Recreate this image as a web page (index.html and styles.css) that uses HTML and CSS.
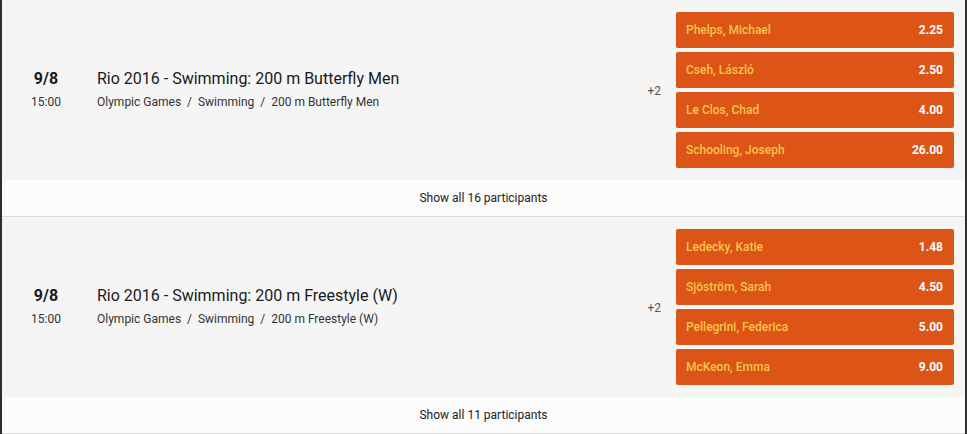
FILE: index.html
```html
<!DOCTYPE html>
<html>
<head>
<meta charset="utf-8">
<link rel="stylesheet" href="styles.css">
</head>
<body>
<div class="list">
  <div class="event">
    <div class="main">
      <div class="date">
        <div class="day">9/8</div>
        <div class="time">15:00</div>
      </div>
      <div class="info">
        <div class="title">Rio 2016 - Swimming: 200 m Butterfly Men</div>
        <div class="path">Olympic Games&nbsp;&nbsp;/&nbsp;&nbsp;Swimming&nbsp;&nbsp;/&nbsp;&nbsp;200 m Butterfly Men</div>
      </div>
      <div class="more">+2</div>
      <div class="outcomes">
        <div class="btn"><span class="name">Phelps, Michael</span><span class="odds">2.25</span></div>
        <div class="btn"><span class="name">Cseh, László</span><span class="odds">2.50</span></div>
        <div class="btn"><span class="name">Le Clos, Chad</span><span class="odds">4.00</span></div>
        <div class="btn"><span class="name">Schooling, Joseph</span><span class="odds">26.00</span></div>
      </div>
    </div>
    <div class="showall">Show all 16 participants</div>
  </div>
  <div class="event">
    <div class="main">
      <div class="date">
        <div class="day">9/8</div>
        <div class="time">15:00</div>
      </div>
      <div class="info">
        <div class="title">Rio 2016 - Swimming: 200 m Freestyle (W)</div>
        <div class="path">Olympic Games&nbsp;&nbsp;/&nbsp;&nbsp;Swimming&nbsp;&nbsp;/&nbsp;&nbsp;200 m Freestyle (W)</div>
      </div>
      <div class="more">+2</div>
      <div class="outcomes">
        <div class="btn"><span class="name">Ledecky, Katie</span><span class="odds">1.48</span></div>
        <div class="btn"><span class="name">Sjöström, Sarah</span><span class="odds">4.50</span></div>
        <div class="btn"><span class="name">Pellegrini, Federica</span><span class="odds">5.00</span></div>
        <div class="btn"><span class="name">McKeon, Emma</span><span class="odds">9.00</span></div>
      </div>
    </div>
    <div class="showall">Show all 11 participants</div>
  </div>
</div>
</body>
</html>
```

FILE: styles.css
```css
html, body {
  margin: 0;
  padding: 0;
  background: #fcfcfc;
}
body {
  font-family: Roboto, "Liberation Sans", Arial, sans-serif;
  color: #222;
}
.list {
  width: 963px;
  border-left: 2px solid #2e2e2e;
  border-right: 2px solid #2e2e2e;
  min-height: 434px;
  background: #fcfcfc;
}
.event {
  border-bottom: 1px solid #dcdcdc;
}
.main {
  display: flex;
  align-items: center;
  background: #f5f5f5;
  padding: 12px 11px 12px 0;
}
.date {
  width: 88px;
  text-align: center;
  margin-right: 7px;
  padding-bottom: 1px;
}
.day {
  font-size: 16px;
  font-weight: 700;
  line-height: 20px;
  color: #1a1a1a;
}
.time {
  font-size: 12px;
  line-height: 16px;
  margin-top: 5px;
  color: #333;
}
.info {
  flex: 1;
  padding-bottom: 1px;
}
.title {
  font-size: 16px;
  line-height: 20px;
  color: #1a1a1a;
}
.path {
  font-size: 12px;
  line-height: 16px;
  margin-top: 5px;
  color: #333;
}
.more {
  font-size: 12px;
  color: #555;
  margin-right: 15px;
  padding-top: 2px;
}
.outcomes {
  width: 278px;
  display: flex;
  flex-direction: column;
  gap: 4px;
}
.btn {
  height: 36px;
  background: #dc5416;
  border-radius: 2px;
  display: flex;
  align-items: center;
  justify-content: space-between;
  padding: 0 11px 0 10px;
  font-size: 12px;
}
.name {
  color: #f8c44c;
  font-weight: 500;
}
.odds {
  color: #fff;
  font-weight: 700;
}
.showall {
  height: 36px;
  line-height: 36px;
  text-align: center;
  font-size: 12px;
  color: #222;
  background: #fcfcfc;
}
```
